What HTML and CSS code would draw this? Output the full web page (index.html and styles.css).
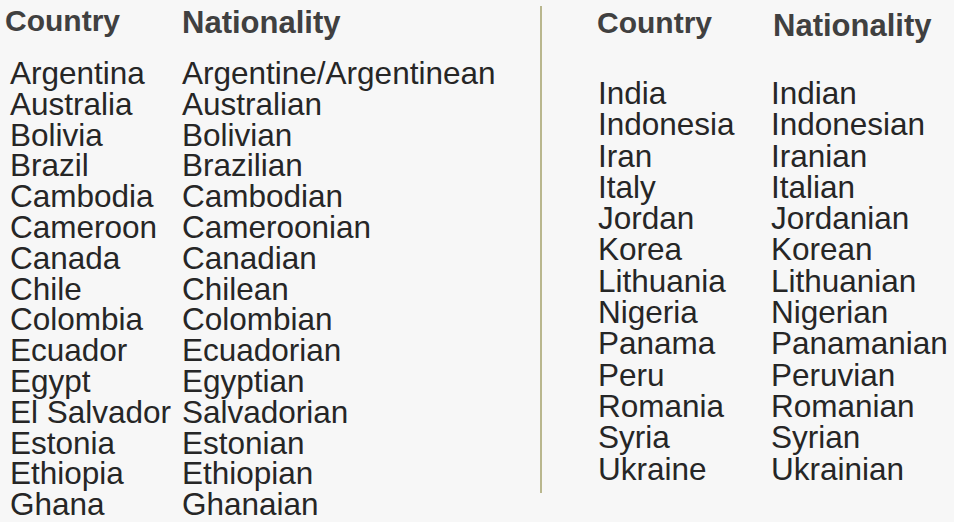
FILE: index.html
```html
<!DOCTYPE html>
<html lang="en">
<head>
<meta charset="utf-8">
<title>Countries and Nationalities</title>
<link rel="stylesheet" href="styles.css">
</head>
<body>
<main class="page">
  <section class="block block-left">
    <div class="head">
      <div class="hc hc-country">Country</div>
      <div class="hc hc-nat">Nationality</div>
    </div>
    <div class="rows">
      <div>Argentina</div><div>Argentine/Argentinean</div>
      <div>Australia</div><div>Australian</div>
      <div>Bolivia</div><div>Bolivian</div>
      <div>Brazil</div><div>Brazilian</div>
      <div>Cambodia</div><div>Cambodian</div>
      <div>Cameroon</div><div>Cameroonian</div>
      <div>Canada</div><div>Canadian</div>
      <div>Chile</div><div>Chilean</div>
      <div>Colombia</div><div>Colombian</div>
      <div>Ecuador</div><div>Ecuadorian</div>
      <div>Egypt</div><div>Egyptian</div>
      <div>El Salvador</div><div>Salvadorian</div>
      <div>Estonia</div><div>Estonian</div>
      <div>Ethiopia</div><div>Ethiopian</div>
      <div>Ghana</div><div>Ghanaian</div>
    </div>
  </section>
  <div class="divider"></div>
  <section class="block block-right">
    <div class="head">
      <div class="hc hc-country">Country</div>
      <div class="hc hc-nat">Nationality</div>
    </div>
    <div class="rows">
      <div>India</div><div>Indian</div>
      <div>Indonesia</div><div>Indonesian</div>
      <div>Iran</div><div>Iranian</div>
      <div>Italy</div><div>Italian</div>
      <div>Jordan</div><div>Jordanian</div>
      <div>Korea</div><div>Korean</div>
      <div>Lithuania</div><div>Lithuanian</div>
      <div>Nigeria</div><div>Nigerian</div>
      <div>Panama</div><div>Panamanian</div>
      <div>Peru</div><div>Peruvian</div>
      <div>Romania</div><div>Romanian</div>
      <div>Syria</div><div>Syrian</div>
      <div>Ukraine</div><div>Ukrainian</div>
    </div>
  </section>
</main>
</body>
</html>
```

FILE: styles.css
```css
html, body {
  margin: 0;
  padding: 0;
  background: #ffffff;
}

body {
  width: 954px;
  height: 522px;
  overflow: hidden;
  font-family: "Liberation Sans", Arial, sans-serif;
}

.page {
  display: flex;
  width: 954px;
  height: 522px;
  background: #f7f7f7;
}

.block {
  display: flex;
  flex-direction: column;
  flex-shrink: 0;
}

.block-left {
  width: 530px;
  padding-left: 10px;
  padding-top: 1px;
}

.block-right {
  padding-left: 56px;
  padding-top: 3px;
}

.head {
  display: grid;
  height: 40px;
  line-height: 40px;
  font-weight: bold;
  font-size: 30px;
  color: #404040;
}

.block-left .head {
  grid-template-columns: 172px auto;
  margin-bottom: 17px;
}

.block-right .head {
  grid-template-columns: 175px auto;
  margin-bottom: 35px;
}

.block-left .hc-country {
  margin-left: -5px;
}

.block-right .hc-country {
  margin-left: -1px;
}

.hc-nat {
  font-size: 31px;
}

.block-left .hc-nat {
  padding-top: 2px;
}

.block-right .hc-nat {
  padding-top: 3px;
}

.rows {
  display: grid;
  font-size: 31.5px;
  color: #262626;
  white-space: nowrap;
}

.block-left .rows {
  grid-template-columns: 172px auto;
  grid-auto-rows: 30.8px;
  line-height: 30.8px;
}

.block-right .rows {
  grid-template-columns: 173px auto;
  grid-auto-rows: 31.3px;
  line-height: 31.3px;
}

.divider {
  flex-shrink: 0;
  width: 2px;
  height: 487px;
  margin-top: 6px;
  background: #b9b78e;
}
```
